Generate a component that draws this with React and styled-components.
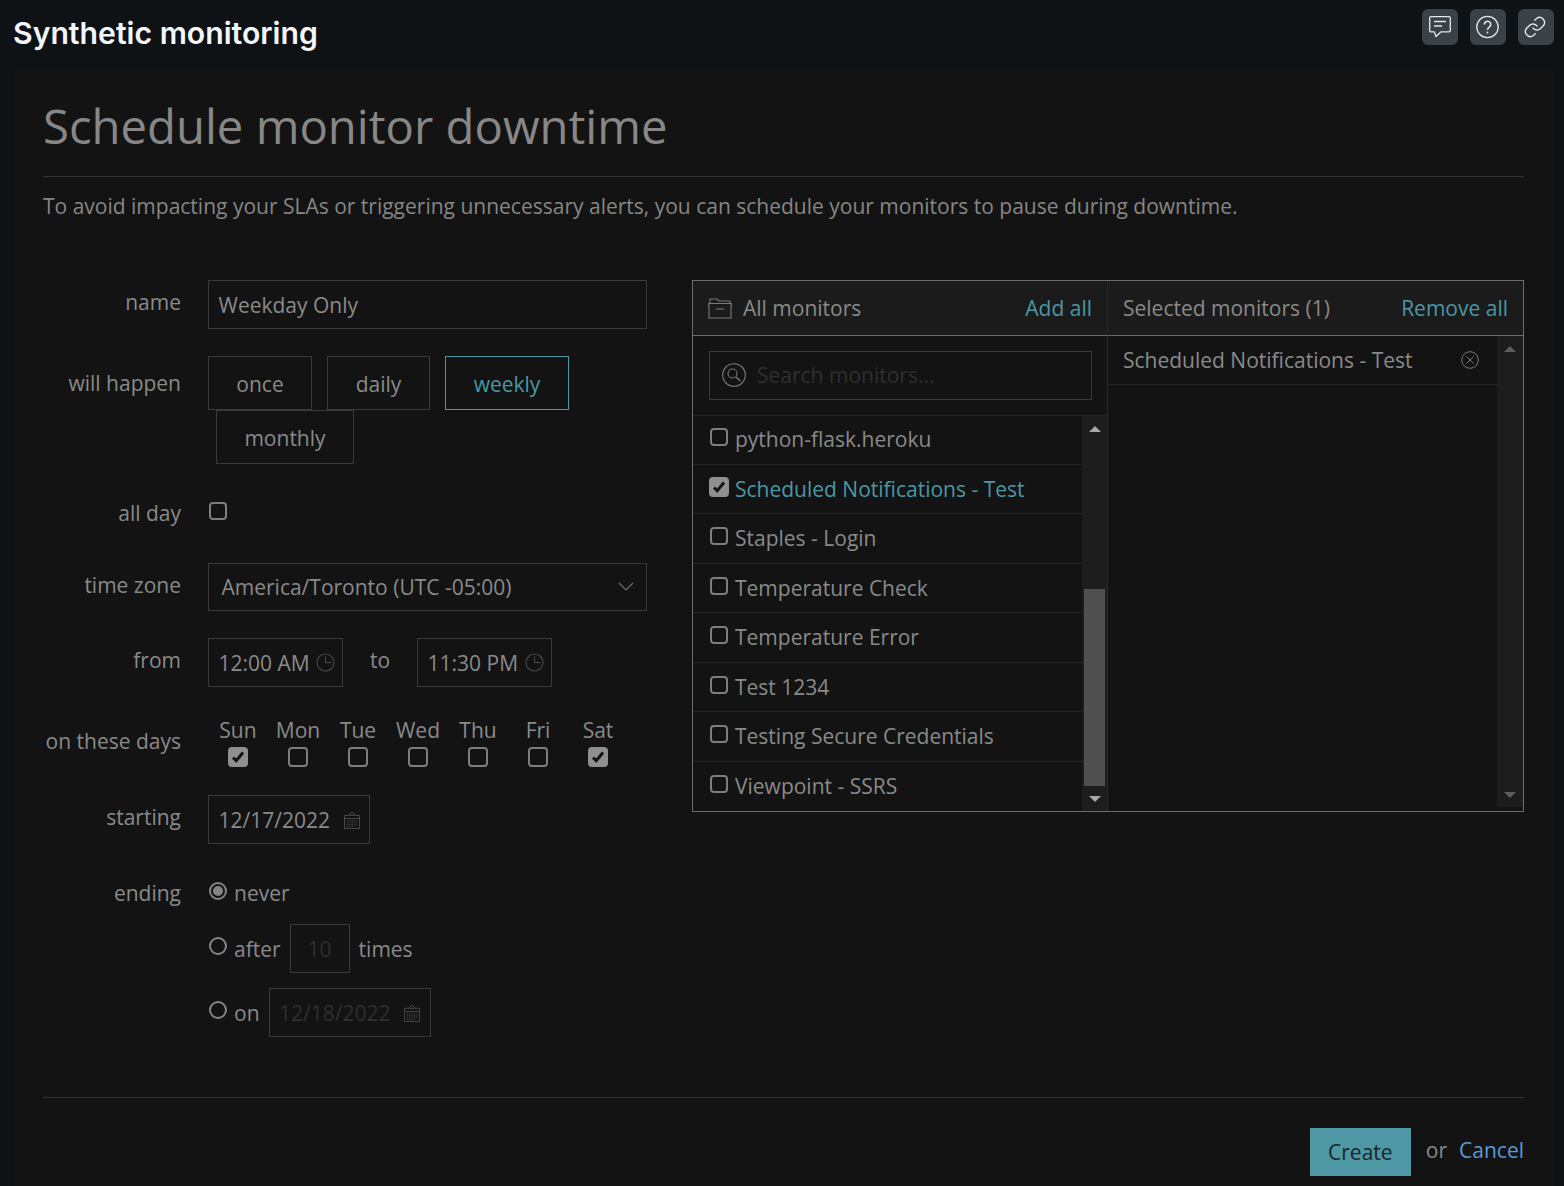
import React from "react";
import styled, { createGlobalStyle } from "styled-components";

const Global = createGlobalStyle`
  html, body { margin: 0; padding: 0; background: #0f1214; }
  body { font-family: "Open Sans", "Liberation Sans", sans-serif; color: #8a8a8a; font-size: 21px; }
  * { box-sizing: border-box; }
`;

const Page = styled.div`
  width: 1564px; height: 1186px; overflow: hidden; display: flex; flex-direction: column;
`;
const TopBar = styled.header`
  height: 69px; flex: none; display: flex; justify-content: space-between; align-items: flex-start;
  padding: 0 10px 0 13px;
`;
const AppTitle = styled.h1`
  margin: 14px 0 0; font: 600 30.2px/38px Inter, "Liberation Sans", sans-serif; color: #f2f6f9; letter-spacing: 0;
`;
const IconRow = styled.div` display: flex; gap: 12px; padding-top: 9px; `;
const IconButton = styled.button`
  width: 36px; height: 36px; border: 0; padding: 0; border-radius: 6px; background: #3a4147; color: #e4e7e9;
  display: flex; align-items: center; justify-content: center;
`;
const Content = styled.main`
  flex: 1; margin: 0 11px 0 13.5px; background: #131313; padding: 26px 29px 0 29.5px;
`;
const Heading = styled.h2`
  margin: 0; font-weight: 400; font-size: 47.25px; line-height: 62px; color: #878787; padding-bottom: 19px; border-bottom: 1px solid #333;
`;
const Intro = styled.p` margin: 13px 0 0; font-size: 21px; line-height: 32px; color: #868686; height: 58px;`;
const Columns = styled.div` display: flex; margin-top: 32px; align-items: flex-start; height: 818px; `;
const FormCol = styled.div` width: 604px; margin-right: 45px; flex: none; `;
const Row = styled.div`
  display: flex; margin-bottom: ${p => p.$mb ?? 27}px; min-height: ${p => p.$h}px;
`;
const Label = styled.div`
  width: 138px; margin-right: 27px; flex: none; text-align: right; line-height: ${p => p.$lh || 44}px; color: #8a8a8a;
`;
const Field = styled.div` flex: 1; min-width: 0; `;
const TextBox = styled.div`
  height: ${p => p.$h || 49}px; width: ${p => p.$w ? p.$w + "px" : "100%"}; border: 1px solid #3a3a3a; display: flex; align-items: center;
  justify-content: ${p => p.$center ? "center" : "space-between"}; padding: 0 ${p => p.$pr ?? 10}px 0 ${p => p.$pl ?? 9.5}px;
  color: ${p => p.$muted ? "#2f2f2f" : "#8a8a8a"}; flex: none;
`;
const Freq = styled.div` display: flex; flex-wrap: wrap; width: 439px; `;
const FreqBtn = styled.div`
  height: 54px; width: ${p => p.$w}px; margin-right: ${p => p.$mr || 0}px; margin-left: ${p => p.$ml || 0}px; padding-top: 1px;
  border: 1px solid ${p => p.$on ? "#4a98a5" : "#3a3a3a"}; color: ${p => p.$on ? "#4a98a5" : "#8a8a8a"};
  display: flex; align-items: center; justify-content: center;
`;
const Box = styled.span`
  display: inline-flex; flex: none; width: ${p => p.$s || 18}px; height: ${p => p.$s || 18}px; border-radius: 4px; border: 2px solid #7d7d7d;
  background: ${p => p.$on ? "#8f8f8f" : "transparent"}; align-items: center; justify-content: center; color: #141414;
  ${p => p.$on && "border-color: #8f8f8f;"}
`;
const Radio = styled.span`
  display: inline-flex; flex: none; width: 18px; height: 18px; border-radius: 50%; border: 2px solid #858585; align-items: center; justify-content: center;
  margin-left: 1px; margin-right: -1px;
  &::after { content: ""; width: 10px; height: 10px; border-radius: 50%; background: ${p => p.$on ? "#858585" : "transparent"}; }
`;
const AllDay = styled.div` padding: 7px 0 0 1px; `;
const Select = styled(TextBox)` padding: 0 12px 1px 12.500px; `;
const TimeRow = styled.div` display: flex; align-items: center; `;
const ToWord = styled.span` width: 74px; text-align: center; margin-top: -6px; `;
const Days = styled.div` display: flex; `;
const Day = styled.div` width: 60px; display: flex; flex-direction: column; align-items: center; line-height: 28px; height: 54px; padding-top: 2px;
  ${Box} { width: 20px; height: 20px; margin-top: 3px; } `;
const EndRow = styled.div`
  display: flex; align-items: center; height: ${p => p.$h}px; margin-bottom: ${p => p.$mb || 0}px; gap: 8px;
  ${Radio} { margin-top: ${p => p.$rt}px; }
  ${TextBox} { margin-left: 1px; }
`;
const TimesWord = styled.span` margin-left: 1px; `;
const Transfer = styled.section`
  width: 832px; height: 532px; border: 1px solid #6c6c6c; display: grid; grid-template-columns: 415px 1fr; grid-template-rows: 55px 1fr;
  flex: none; background: #131313;
`;
const PaneHead = styled.div`
  background: #1b1b1b; border-bottom: 1px solid #6c6c6c; display: flex; align-items: center; justify-content: space-between;
  padding: 0 15px; ${p => p.$left && "border-right: 1px solid #2a2a2a;"}
`;
const PaneTitle = styled.div` display: flex; align-items: center; gap: 11px; `;
const TealLink = styled.a` color: #4a98a5; `;
const LeftPane = styled.div` border-right: 1px solid #2a2a2a; display: flex; flex-direction: column; min-height: 0; `;
const SearchWrap = styled.div` height: 80px; padding: 15px 15px 0 16px; flex: none; border-bottom: 1px solid #262626; `;
const SearchBox = styled.div`
  height: 49px; border: 1px solid #3a3a3a; display: flex; align-items: center; padding: 0 0 1px 12px; gap: 11px; color: #2f2f2f;
`;
const ListArea = styled.div` flex: 1; display: flex; min-height: 0; `;
const List = styled.div` flex: 1; min-width: 0; margin-top: -1px; `;
const ItemRow = styled.div`
  height: 49.5px; border-bottom: ${p => p.$last ? "none" : "1px solid #262626"}; display: flex; align-items: center; padding-left: ${p => p.$on ? 16 : 17}px; gap: 7px;
  color: ${p => p.$on ? "#4a98a5" : "#8a8a8a"};
  ${Box} { margin-top: -4px; ${p => p.$on && "width:20px;height:20px;margin-top:-3px;margin-right:-1px;"} }
`;
const Scroll = styled.div`
  width: ${p => p.$w}px; flex: none; background: #1d1d1d; display: flex; flex-direction: column; align-items: center; justify-content: space-between;
  padding: 10px 0 9px; position: relative; height: ${p => p.$height || "auto"};
`;
const Arrow = styled.span`
  width: 0; height: 0; border-left: 6px solid transparent; border-right: 6px solid transparent;
  ${p => p.$down ? `border-top: 6px solid ${p.$c};` : `border-bottom: 6px solid ${p.$c};`}
`;
const Thumb = styled.div` position: absolute; left: 2px; width: 21px; top: 173px; height: 197px; background: #505050; `;
const RightPane = styled.div` display: flex; min-height: 0; `;
const Selected = styled.div` flex: 1; `;
const SelectedRow = styled.div`
  height: 49px; border-bottom: 1px solid #262626; display: flex; align-items: center; justify-content: space-between; padding: 0 18px 0 15px;
`;
const Footer = styled.div`
  border-top: 1px solid #333; margin-top: -1px; display: flex; justify-content: flex-end; align-items: center; height: 78px; padding-top: 30px;
`;
const CreateBtn = styled.button`
  width: 101px; height: 48px; border: 0; background: #4d98a4; color: #1d2527; font: 400 21px "Open Sans", sans-serif; padding: 0;
`;
const OrWord = styled.span` margin: -4px 12px 0 15px; `;
const CancelLink = styled.a` color: #5b9ad8; margin-top: -4px; `;

const S = { fill: "none", stroke: "currentColor" };
const Chat = () => (
  <svg width="24" height="24" viewBox="0 0 24 24" {...S} strokeWidth="1.300" strokeLinejoin="round">
    <path d="M3 1.700h18a1.300 1.300 0 0 1 1.300 1.300v12.500a1.300 1.300 0 0 1-1.300 1.300H13l-5 4.700-1.700-4.700H3a1.300 1.300 0 0 1-1.300-1.300V3A1.300 1.300 0 0 1 3 1.700z" />
    <path d="M6 6.500h12M6 11h8" />
  </svg>
);
const Help = () => (
  <svg width="24" height="24" viewBox="0 0 24 24" {...S} strokeWidth="1.300">
    <circle cx="11.500" cy="12" r="10.700" />
    <path d="M8.300 9.500a3.200 3.200 0 1 1 5 2.600c-1.100.8-1.800 1.300-1.800 2.700" strokeWidth="1.600" />
    <circle cx="11.500" cy="17.500" r=".9" fill="currentColor" stroke="none" />
  </svg>
);
const Chain = () => (
  <svg width="24" height="24" viewBox="1 0 24 24" {...S} strokeWidth="1.400" strokeLinecap="round">
    <path d="M10 13a5 5 0 0 0 7.500.5l3-3a5 5 0 0 0-7-7l-1.700 1.700" />
    <path d="M14 11a5 5 0 0 0-7.500-.5l-3 3a5 5 0 0 0 7 7l1.700-1.700" />
  </svg>
);
const Tick = () => (
  <svg width="14" height="14" viewBox="0 0 14 14" fill="none" stroke="currentColor" strokeWidth="3"><path d="M2 7.500l3.200 3.200L12 2.500" /></svg>
);
const Clock = () => (
  <svg width="19" height="19" viewBox="0 0 19 19" fill="none" stroke="#4a4a4a" strokeWidth="1.100">
    <circle cx="9.500" cy="9.500" r="8.500" /><path d="M9.500 3.500v6h6" />
  </svg>
);
const Calendar = ({ c = "#4f4f4f" }) => (
  <svg width="16" height="18" viewBox="0 0 17 19" fill="none" stroke={c} strokeWidth="1">
    <path d="M.5 4.500h16v14H.5zM.5 8h16M5 4.500L8.500 1l3.500 3.500" />
    <path d="M3 10.500h11M3 12.500h11M3 14.500h11M3 16.500h8" strokeDasharray="1.500 1" />
  </svg>
);
const Chevron = () => (
  <svg width="16" height="9" viewBox="0 0 16 9" fill="none" stroke="#6f6f6f" strokeWidth="1.200"><path d="M1 1l7 7 7-7" /></svg>
);
const Folder = () => (
  <svg width="24" height="21" viewBox="0 0 24 21" fill="none" stroke="#7a7a7a" strokeWidth="1.100">
    <path d="M2 5V1h7l2 2h11v2M.6 5.500h22.800v2H23V20H1V7.500H.6z" /><path d="M8 11h8" />
  </svg>
);
const SearchIcon = () => (
  <svg width="24" height="24" viewBox="0 0 24 24" fill="none" stroke="#7a7a7a" strokeWidth="1.100">
    <circle cx="12" cy="12" r="11.300" /><circle cx="10.500" cy="10.500" r="4.500" /><path d="M14 14l4.500 4" strokeWidth="1.500" />
  </svg>
);
const RemoveIcon = () => (
  <svg width="18" height="18" viewBox="0 0 18 18" fill="none" stroke="#7c7c7c" strokeWidth="1">
    <circle cx="9" cy="9" r="8.300" /><path d="M5.500 5.500l7 7M12.500 5.500l-7 7" />
  </svg>
);

const monitors = [
  ["python-flask.heroku"], ["Scheduled Notifications - Test", true], ["Staples - Login"], ["Temperature Check"],
  ["Temperature Error"], ["Test 1234"], ["Testing Secure Credentials"], ["Viewpoint - SSRS"],
];
const days = [["Sun", true], ["Mon"], ["Tue"], ["Wed"], ["Thu"], ["Fri"], ["Sat", true]];

export default function App() {
  return (
    <Page>
      <Global />
      <TopBar>
        <AppTitle>Synthetic monitoring</AppTitle>
        <IconRow>
          <IconButton><Chat /></IconButton>
          <IconButton><Help /></IconButton>
          <IconButton><Chain /></IconButton>
        </IconRow>
      </TopBar>
      <Content>
        <Heading>Schedule monitor downtime</Heading>
        <Intro>To avoid impacting your SLAs or triggering unnecessary alerts, you can schedule your monitors to pause during downtime.</Intro>
        <Columns>
          <FormCol>
            <Row>
              <Label>name</Label>
              <Field><TextBox>Weekday Only</TextBox></Field>
            </Row>
            <Row>
              <Label $lh={54}>will happen</Label>
              <Field>
                <Freq>
                  <FreqBtn $w={104} $mr={15}>once</FreqBtn>
                  <FreqBtn $w={103} $mr={15}>daily</FreqBtn>
                  <FreqBtn $w={124} $on>weekly</FreqBtn>
                  <FreqBtn $w={138} $ml={8}>monthly</FreqBtn>
                </Freq>
              </Field>
            </Row>
            <Row $h={45}>
              <Label $lh={44}>all day</Label>
              <Field><AllDay><Box /></AllDay></Field>
            </Row>
            <Row>
              <Label>time zone</Label>
              <Field><Select $h={48}>America/Toronto (UTC -05:00)<Chevron /></Select></Field>
            </Row>
            <Row>
              <Label>from</Label>
              <Field>
                <TimeRow>
                  <TextBox $w={135} $pr={7}>12:00 AM<Clock /></TextBox>
                  <ToWord>to</ToWord>
                  <TextBox $w={135} $pr={7}>11:30 PM<Clock /></TextBox>
                </TimeRow>
              </Field>
            </Row>
            <Row $h={54}>
              <Label $lh={54}>on these days</Label>
              <Field>
                <Days>
                  {days.map(([d, on]) => (
                    <Day key={d}>{d}<Box $on={on}>{on && <Tick />}</Box></Day>
                  ))}
                </Days>
              </Field>
            </Row>
            <Row>
              <Label>starting</Label>
              <Field><TextBox $w={162} $pr={9}>12/17/2022<Calendar /></TextBox></Field>
            </Row>
            <Row $mb={0}>
              <Label $lh={44}>ending</Label>
              <Field>
                <EndRow $h={44} $mb={9} $rt={-4}><Radio $on />never</EndRow>
                <EndRow $h={49} $mb={15} $rt={-6}>
                  <Radio />after
                  <TextBox $w={60} $center $muted $pl={0} $pr={0}>10</TextBox>
                  <TimesWord>times</TimesWord>
                </EndRow>
                <EndRow $h={49} $rt={-6}>
                  <Radio />on
                  <TextBox $w={162} $muted $pr={10}>12/18/2022<Calendar c="#484848" /></TextBox>
                </EndRow>
              </Field>
            </Row>
          </FormCol>
          <Transfer>
            <PaneHead $left>
              <PaneTitle><Folder />All monitors</PaneTitle>
              <TealLink>Add all</TealLink>
            </PaneHead>
            <PaneHead>
              <PaneTitle>Selected monitors (1)</PaneTitle>
              <TealLink>Remove all</TealLink>
            </PaneHead>
            <LeftPane>
              <SearchWrap>
                <SearchBox><SearchIcon />Search monitors...</SearchBox>
              </SearchWrap>
              <ListArea>
                <List>
                  {monitors.map(([m, on], i) => (
                    <ItemRow key={m} $on={on} $last={i === monitors.length - 1}>
                      <Box $on={on}>{on && <Tick />}</Box>{m}
                    </ItemRow>
                  ))}
                </List>
                <Scroll $w={25}>
                  <Arrow $c="#a8a8a8" />
                  <Thumb />
                  <Arrow $down $c="#a8a8a8" />
                </Scroll>
              </ListArea>
            </LeftPane>
            <RightPane>
              <Selected>
                <SelectedRow>Scheduled Notifications - Test<RemoveIcon /></SelectedRow>
              </Selected>
              <Scroll $w={26} $height="471px">
                <Arrow $c="#5c5c5c" />
                <Arrow $down $c="#5c5c5c" />
              </Scroll>
            </RightPane>
          </Transfer>
        </Columns>
        <Footer>
          <CreateBtn>Create</CreateBtn>
          <OrWord>or</OrWord>
          <CancelLink>Cancel</CancelLink>
        </Footer>
      </Content>
    </Page>
  );
}
